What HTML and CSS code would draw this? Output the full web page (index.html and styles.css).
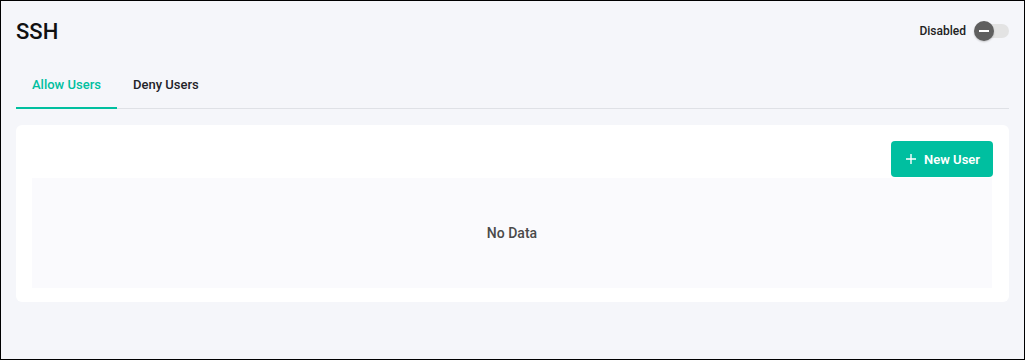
FILE: index.html
```html
<!DOCTYPE html>
<html lang="en">
<head>
  <meta charset="UTF-8">
  <title>SSH</title>
  <link rel="stylesheet" href="styles.css">
</head>
<body>
  <div class="page">
    <div class="header">
      <h1>SSH</h1>
      <div class="status">
        <span>Disabled</span>
        <div class="switch">
          <div class="knob"></div>
        </div>
      </div>
    </div>

    <div class="tabs">
      <a href="#" class="tab active">Allow Users</a>
      <a href="#" class="tab">Deny Users</a>
    </div>

    <div class="card">
      <div class="toolbar">
        <button class="btn-add">
          <svg width="12" height="12" viewBox="0 0 12 12"><path d="M6 1v10M1 6h10" stroke="#fff" stroke-width="1.4"/></svg>
          New User
        </button>
      </div>
      <div class="empty">No Data</div>
    </div>
  </div>
</body>
</html>
```

FILE: styles.css
```css
html, body {
  height: 100%;
}

body {
  margin: 0;
  font-family: Roboto, "Liberation Sans", sans-serif;
  background-color: #f5f6fa;
  color: #1f2329;
  box-sizing: border-box;
  border: 1px solid #000;
}

.page {
  padding: 0 15px;
}

.header {
  display: flex;
  justify-content: space-between;
  align-items: center;
  height: 60px;
}

.header h1 {
  margin: 0;
  font-size: 22px;
  font-weight: 500;
  color: #111;
}

.status {
  display: flex;
  align-items: center;
  gap: 10px;
  font-size: 12px;
  font-weight: 500;
  color: #222;
}

.switch {
  position: relative;
  width: 33px;
  height: 14px;
  border-radius: 7px;
  background-color: #e3e3e3;
}

.knob {
  position: absolute;
  left: -2px;
  top: -3px;
  width: 20px;
  height: 20px;
  border-radius: 50%;
  background-color: #5f5f5f;
  box-shadow: 0 1px 2px rgba(0, 0, 0, 0.2);
}

.knob::after {
  content: "";
  position: absolute;
  left: 5px;
  top: 9px;
  width: 10px;
  height: 2px;
  background-color: #fff;
}

.tabs {
  display: flex;
  border-bottom: 1px solid #dfe1e6;
  margin-bottom: 16px;
}

.tab {
  padding: 16px 16px 15px;
  font-size: 13px;
  font-weight: 500;
  color: #1f2329;
  text-decoration: none;
  border-bottom: 2px solid transparent;
  margin-bottom: -1px;
}

.tab.active {
  color: #00bf9f;
  border-bottom-color: #00bf9f;
}

.card {
  background-color: #fff;
  border-radius: 6px;
  padding: 16px 16px 14px;
}

.toolbar {
  display: flex;
  justify-content: flex-end;
}

.btn-add {
  display: flex;
  align-items: center;
  gap: 7px;
  height: 36px;
  padding: 0 13px 0 14px;
  border: none;
  border-radius: 4px;
  background-color: #00bfa0;
  color: #fff;
  font-family: inherit;
  font-size: 13px;
  font-weight: 600;
  cursor: pointer;
}

.empty {
  height: 110px;
  margin-top: 1px;
  margin-right: 1px;
  display: flex;
  align-items: center;
  justify-content: center;
  background-color: #fafafd;
  font-size: 14px;
  font-weight: 500;
  color: #4a4a4a;
}
```
